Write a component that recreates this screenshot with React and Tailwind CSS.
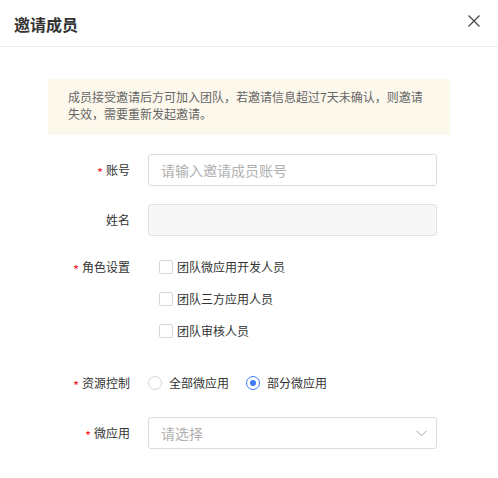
import React from "react";

const font = { fontFamily: '"Noto Sans CJK SC", "Noto Sans", sans-serif' };

function Label({ required, children }) {
  return (
    <div className="w-[82px] shrink-0 flex justify-end items-center text-[12px] leading-[16px] text-[#333]">
      {required && <span className="text-[#f5222d] mr-[3px] text-[13px] leading-none pt-[5px]">*</span>}
      <span>{children}</span>
    </div>
  );
}

function Checkbox({ label }) {
  return (
    <label className="flex items-center h-[32px] gap-[4px] text-[12px] text-[#333]">
      <span className="w-[14px] h-[14px] border border-[#d3d8e0] rounded-[2px] bg-white" />
      <span>{label}</span>
    </label>
  );
}

function Radio({ label, checked }) {
  return (
    <label className="flex items-center gap-[7px] text-[12px] text-[#333]">
      <span
        className={
          "w-[14px] h-[14px] rounded-full border flex items-center justify-center bg-white " +
          (checked ? "border-[#3b7bfb]" : "border-[#d6d6d6]")
        }
      >
        {checked && <span className="w-[6px] h-[6px] rounded-full bg-[#3b7bfb]" />}
      </span>
      <span>{label}</span>
    </label>
  );
}

export default function App() {
  return (
    <div className="w-[498px] h-[478px] bg-white" style={font}>
      <div className="h-[47px] border-b border-[#ededed] flex items-center justify-between pl-[14px] pr-[18px]">
        <span className="text-[16px] font-bold text-[#333] leading-[20px] mt-[2px]">邀请成员</span>
        <svg width="12" height="12" viewBox="0 0 12 12" className="mt-[-4px]">
          <path d="M0.5 0.5 L11.5 11.5 M11.5 0.5 L0.5 11.5" stroke="#444" strokeWidth="1.2" fill="none" />
        </svg>
      </div>

      <div className="mt-[32px] mx-[48px] bg-[#fdf8ec] pl-[20px] pr-[20px] pt-[9px] pb-[13px] text-[12px] leading-[17px] text-[#666]">
        成员接受邀请后方可加入团队，若邀请信息超过7天未确认，则邀请失效，需要重新发起邀请。
      </div>

      <div className="ml-[48px] mt-[19px] flex flex-col">
        <div className="flex items-center gap-[18px] h-[32px]">
          <Label required>账号</Label>
          <div className="w-[289px] h-[32px] border border-[#dcdcdc] rounded-[3px] flex items-center px-[12px] text-[14px] text-[#b0b0b0]">
            请输入邀请成员账号
          </div>
        </div>

        <div className="flex items-center gap-[18px] h-[32px] mt-[18px]">
          <Label>姓名</Label>
          <div className="w-[289px] h-[32px] border border-[#e2e2e2] rounded-[3px] bg-[#f7f7f7]" />
        </div>

        <div className="flex items-start gap-[18px] mt-[15px]">
          <div className="h-[32px] flex items-center">
            <Label required>角色设置</Label>
          </div>
          <div className="flex flex-col pl-[11px]">
            <Checkbox label="团队微应用开发人员" />
            <Checkbox label="团队三方应用人员" />
            <Checkbox label="团队审核人员" />
          </div>
        </div>

        <div className="flex items-center gap-[18px] h-[32px] mt-[20px]">
          <Label required>资源控制</Label>
          <div className="flex items-center gap-[17px]">
            <Radio label="全部微应用" />
            <Radio label="部分微应用" checked />
          </div>
        </div>

        <div className="flex items-center gap-[18px] h-[32px] mt-[18px]">
          <Label required>微应用</Label>
          <div className="w-[289px] h-[32px] border border-[#dcdcdc] rounded-[3px] flex items-center justify-between pl-[12px] pr-[9px] text-[14px] text-[#b0b0b0]">
            <span>请选择</span>
            <svg width="11" height="7" viewBox="0 0 11 7">
              <path d="M0.5 0.8 L5.5 5.8 L10.5 0.8" stroke="#aaa" strokeWidth="1" fill="none" />
            </svg>
          </div>
        </div>
      </div>
    </div>
  );
}
